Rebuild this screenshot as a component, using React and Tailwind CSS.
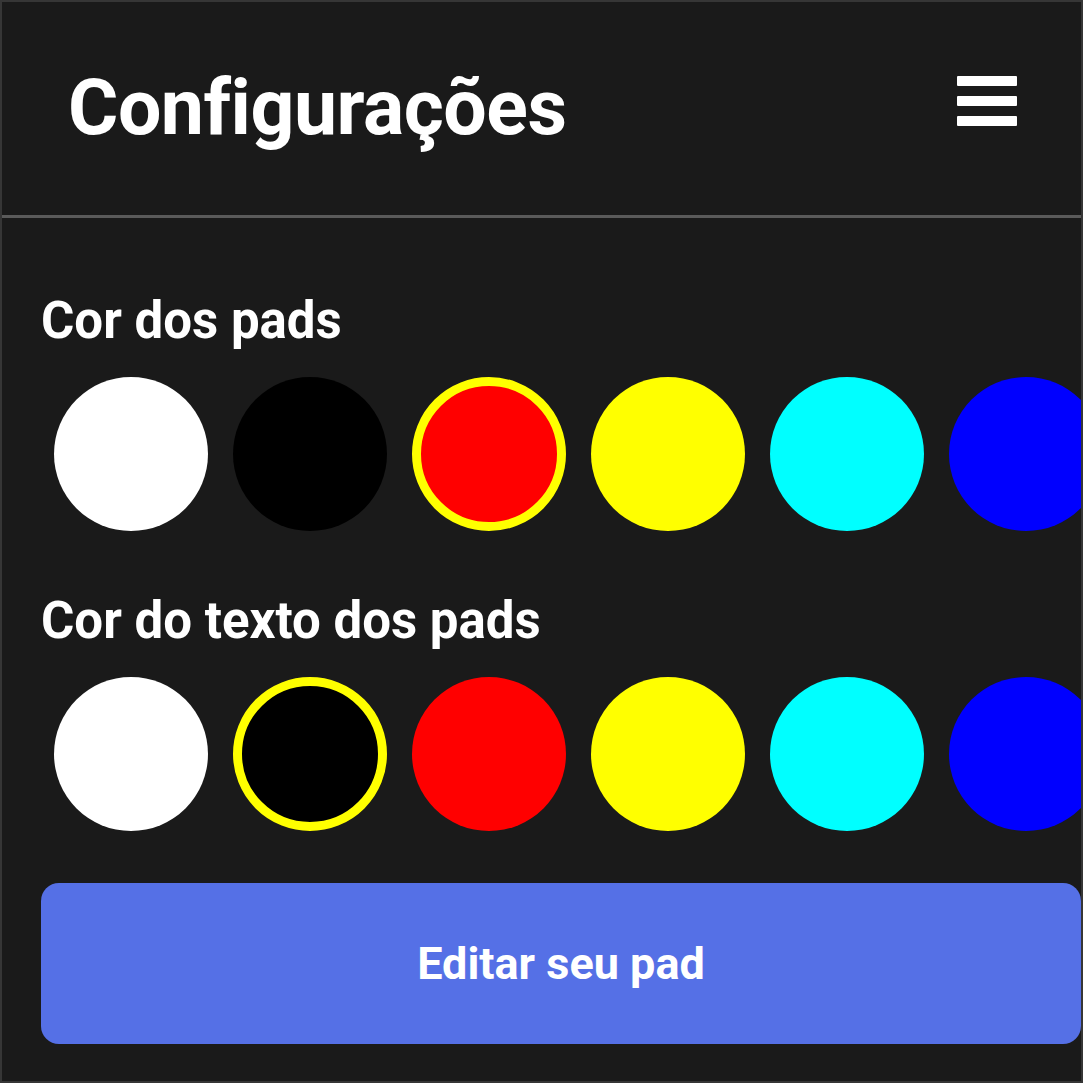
import React from "react";

const colors = ["#ffffff", "#000000", "#ff0000", "#ffff00", "#00ffff", "#0000ff"];

function Row({ selected }) {
  return (
    <div className="flex items-center">
      {colors.map((c, i) => (
        <div key={i} className="mx-[12.5px] shrink-0">
          <div
            className={
              "w-[154px] h-[154px] rounded-full " +
              (i === selected ? "border-[9px] border-[#ffff00]" : "")
            }
            style={{ backgroundColor: c }}
          />
        </div>
      ))}
    </div>
  );
}

export default function App() {
  return (
    <div
      className="w-[1083px] h-[1083px] border-[2px] border-[#363636] bg-[#1a1a1a] overflow-hidden flex flex-col text-white"
      style={{ fontFamily: "Roboto, 'Noto Sans', sans-serif" }}
    >
      <header className="h-[213px] shrink-0 flex items-center justify-between pl-[66px] pr-[64px]">
        <h1 className="text-[77px] font-bold leading-none tracking-[-0.5px]">Configurações</h1>
        <div className="flex flex-col gap-[10px] w-[60px] mb-[16px]">
          <span className="block h-[10px] bg-white rounded-[1px]" />
          <span className="block h-[10px] bg-white rounded-[1px]" />
          <span className="block h-[10px] bg-white rounded-[1px]" />
        </div>
      </header>
      <div className="h-[3px] bg-[#5a5a5a] shrink-0" />
      <main className="pl-[39px] flex flex-col">
        <h2 className="mt-[73px] text-[51px] leading-[60px] font-bold">Cor dos pads</h2>
        <div className="mt-[26px]">
          <Row selected={2} />
        </div>
        <h2 className="mt-[60px] text-[51px] leading-[60px] font-bold">Cor do texto dos pads</h2>
        <div className="mt-[26px]">
          <Row selected={1} />
        </div>
        <button className="mt-[52px] w-[1040px] h-[161px] rounded-[18px] bg-[#5570e6] flex items-center justify-center text-[45px] font-bold text-white">
          Editar seu pad
        </button>
      </main>
    </div>
  );
}
